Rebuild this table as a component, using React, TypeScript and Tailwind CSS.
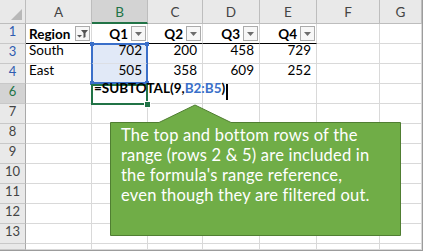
import React from "react";

const FONT = { fontFamily: "Lato, 'Open Sans', sans-serif" };

function DropBtn() {
  return (
    <div className="w-[15px] h-[15px] border border-[#ababab] bg-[#f7f7f7] flex items-center justify-center shrink-0">
      <svg width="7" height="4" viewBox="0 0 7 4">
        <polygon points="0,0 7,0 3.5,4" fill="#6d6d6d" />
      </svg>
    </div>
  );
}

function FilterBtn() {
  return (
    <div className="w-[15px] h-[15px] border border-[#ababab] bg-[#f7f7f7] shrink-0">
      <svg width="13" height="13" viewBox="0 0 13 13">
        <polygon points="5,3 12,3 9.5,6 9.5,10 7.5,11 7.5,6" fill="#555" />
        <polygon points="1,8 6,8 3.5,10.5" fill="#555" />
      </svg>
    </div>
  );
}

const colW = ["w-[26px]", "w-[66px]", "w-[56px]", "w-[55px]", "w-[57px]", "w-[57px]", "w-[63px]", "flex-1"];
const cols = ["A", "B", "C", "D", "E", "F", "G"];

type RowDef = { num: string; h: string; blue?: boolean; sel?: boolean; cells?: (React.ReactNode | null)[]; header?: boolean };

function Num({ v }: { v: string }) {
  return <div className="w-full h-full flex items-end justify-end pr-[5px] pb-[3px]">{v}</div>;
}
function Txt({ v }: { v: string }) {
  return <div className="w-full h-full flex items-end pl-[3px] pb-[3px]">{v}</div>;
}
function Hdr({ v, first }: { v: string; first?: boolean }) {
  if (first) {
    return (
      <div className="w-full h-full flex items-center justify-between pl-[3px] pr-[1px] font-bold">
        <span className="pt-[2px]">{v}</span>
        <FilterBtn />
      </div>
    );
  }
  return (
    <div className="w-full h-full flex items-center justify-end gap-[3px] pr-[1px] font-bold">
      <span className="pt-[2px]">{v}</span>
      <DropBtn />
    </div>
  );
}

export default function App() {
  const rows: RowDef[] = [
    {
      num: "1",
      h: "h-[20px]",
      blue: true,
      header: true,
      cells: [
        <Hdr v="Region" first />,
        <Hdr v="Q1" />,
        <Hdr v="Q2" />,
        <Hdr v="Q3" />,
        <Hdr v="Q4" />,
        null,
        null,
      ],
    },
    { num: "3", h: "h-[20px]", blue: true, cells: [<Txt v="South" />, <Num v="702" />, <Num v="200" />, <Num v="458" />, <Num v="729" />, null, null] },
    { num: "4", h: "h-[20px]", blue: true, cells: [<Txt v="East" />, <Num v="505" />, <Num v="358" />, <Num v="609" />, <Num v="252" />, null, null] },
    { num: "6", h: "h-[20px]", sel: true },
    { num: "7", h: "h-[20px]" },
    { num: "8", h: "h-[20px]" },
    { num: "9", h: "h-[20px]" },
    { num: "10", h: "h-[20px]" },
    { num: "11", h: "h-[20px]" },
    { num: "12", h: "h-[20px]" },
    { num: "13", h: "h-[20px]" },
    { num: "", h: "flex-1" },
  ];

  return (
    <div
      className="relative w-[423px] h-[251px] overflow-hidden bg-white border-r border-b border-[#9c9c9c] text-[13.5px] text-black flex flex-col"
      style={FONT}
    >
      {/* column header row */}
      <div className="flex h-[24px] shrink-0">
        <div className={`${colW[0]} h-full bg-[#e9e9e9] border-r border-b border-[#bdbdbd] relative`}>
          <svg className="absolute left-[11px] top-[9px]" width="12" height="12" viewBox="0 0 12 12">
            <polygon points="11,0 11,11 0,11" fill="#b8b8b8" />
          </svg>
        </div>
        {cols.map((c, i) => (
          <div
            key={c}
            className={`${colW[i + 1]} h-full flex items-center justify-center border-r text-[13.5px] ${
              c === "B"
                ? "bg-[#d3d3d3] text-[#217346] border-b-2 border-b-[#217346] border-r-[#bdbdbd]"
                : "bg-[#e9e9e9] text-[#444] border-b border-[#bdbdbd]"
            }`}
          >
            <span className="pt-[2px]">{c}</span>
          </div>
        ))}
      </div>

      {rows.map((r, ri) => (
        <div key={ri} className={`flex ${r.h} shrink-0`}>
          <div
            className={`${colW[0]} h-full flex items-end justify-center pb-[2px] border-r border-b border-r-[#a9a9a9] border-b-[#c8c8c8] text-[13px] ${
              r.sel ? "bg-[#d3d3d3] text-[#217346]" : "bg-[#e9e9e9] " + (r.blue ? "text-[#2f5cb0]" : "text-[#444]")
            }`}
          >
            {r.num}
          </div>
          {cols.map((c, ci) => (
            <div
              key={c}
              className={`${colW[ci + 1]} h-full border-r border-b border-[#d9d9d9] ${
                r.header && ci < 5 ? "border-b-black" : ""
              }`}
            >
              {r.cells ? r.cells[ci] : null}
            </div>
          ))}
        </div>
      ))}

      {/* selection B3:B4 */}
      <div className="absolute left-[91px] top-[43px] w-[57px] h-[41px] border-2 border-[#3a6fc9] bg-[#e1e9f7]" />
      <div className="absolute left-[90px] top-[42px] w-[4px] h-[4px] bg-[#3a6fc9]" />
      <div className="absolute left-[145px] top-[42px] w-[4px] h-[4px] bg-[#3a6fc9]" />
      <div className="absolute left-[90px] top-[81px] w-[4px] h-[4px] bg-[#3a6fc9]" />
      <div className="absolute left-[145px] top-[81px] w-[4px] h-[4px] bg-[#3a6fc9]" />
      {/* numbers over selection */}
      <div className="absolute left-[92px] top-[44px] w-[55px] h-[19px] flex items-end justify-end pr-[5px] pb-[3px]">702</div>
      <div className="absolute left-[92px] top-[64px] w-[55px] h-[19px] flex items-end justify-end pr-[5px] pb-[3px]">505</div>
      <div className="absolute left-[92px] top-[63px] w-[55px] h-[1px] bg-[#d9d9d9]/60" />

      {/* active cell B6 */}
      <div className="absolute left-[91px] top-[84px] w-[57px] h-[21px] border-2 border-[#217346]" />
      <div className="absolute left-[145px] top-[102px] w-[5px] h-[5px] bg-[#217346] outline outline-1 outline-white" />
      <div className="absolute left-[94px] top-[84px] h-[19px] flex items-end pb-[5px] font-bold whitespace-nowrap">
        <span>=SUBTOTAL(9,</span>
        <span className="text-[#3a6fc9]">B2:B5</span>
        <span>)</span>
        <span className="inline-block w-[1.5px] h-[16px] bg-black ml-[1px] mb-[-2px]" />
      </div>

      {/* callout */}
      <svg className="absolute left-0 top-0" width="423" height="251">
        <polygon
          points="110.5,122.5 159,122.5 195,105 231,122.5 400.5,122.5 400.5,235.5 110.5,235.5"
          fill="#70ad47"
          stroke="#507e32"
          strokeWidth="1"
        />
      </svg>
      <div className="absolute left-[121px] top-[125px] text-white text-[16.5px] tracking-[0.2px] leading-[20px] whitespace-nowrap">
        <div>The top and bottom rows of the</div>
        <div>range (rows 2 &amp; 5) are included in</div>
        <div>the formula's range reference,</div>
        <div>even though they are filtered out.</div>
      </div>
    </div>
  );
}
